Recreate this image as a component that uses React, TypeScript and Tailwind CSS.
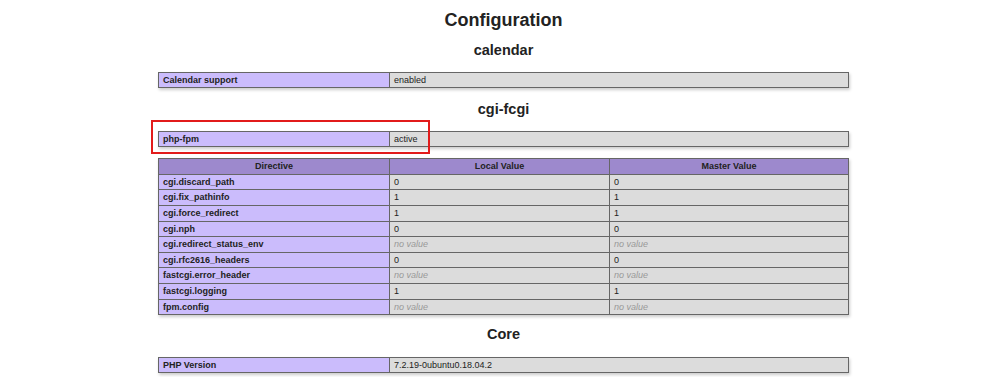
import React from "react";

type Row = { name: string; local: string | null; master: string | null };

const cgiRows: Row[] = [
  { name: "cgi.discard_path", local: "0", master: "0" },
  { name: "cgi.fix_pathinfo", local: "1", master: "1" },
  { name: "cgi.force_redirect", local: "1", master: "1" },
  { name: "cgi.nph", local: "0", master: "0" },
  { name: "cgi.redirect_status_env", local: null, master: null },
  { name: "cgi.rfc2616_headers", local: "0", master: "0" },
  { name: "fastcgi.error_header", local: null, master: null },
  { name: "fastcgi.logging", local: "1", master: "1" },
  { name: "fpm.config", local: null, master: null },
];

const cell = "border border-[#666] px-[4px] py-[2px] text-[9px] leading-[10.6px] align-baseline";
const eCell = `${cell} bg-[#cbbcfc] font-bold text-[#222] w-[231px]`;
const vCell = `${cell} bg-[#dcdcdc] text-[#222]`;
const hCell = `${cell} bg-[#9d89cd] font-bold text-[#222] text-center`;

const Value = ({ v }: { v: string | null }) =>
  v === null ? <i className="text-[#999]">no value</i> : <>{v}</>;

const Section = ({ title, className = "mt-[14px] mb-[14px]" }: { title: string; className?: string }) => (
  <h2 className={`text-[14.5px] leading-[14.5px] font-bold text-[#222] text-center ${className}`}>
    {title}
  </h2>
);

const KeyValue = ({ k, v }: { k: string; v: string }) => (
  <table className="w-[691px] border-collapse shadow-[1px_2px_3px_#ccc]">
    <tbody>
      <tr>
        <td className={eCell}>{k}</td>
        <td className={vCell}>{v}</td>
      </tr>
    </tbody>
  </table>
);

export default function App() {
  return (
    <div
      className="w-[1004px] h-[377px] overflow-hidden bg-white flex flex-col items-center pt-[11px] pl-[3px]"
      style={{ fontFamily: '"Liberation Sans", Arial, sans-serif' }}
    >
      <h1 className="text-[18px] leading-[18px] font-bold text-[#222] text-center">
        Configuration
      </h1>

      <Section title="calendar" />
      <KeyValue k="Calendar support" v="enabled" />

      <Section title="cgi-fcgi" />
      <div className="relative">
        <KeyValue k="php-fpm" v="active" />
        {/* annotation box */}
        <div className="absolute left-[-7px] top-[-11px] w-[279px] h-[34px] border-2 border-[#e21b1b]" />
      </div>

      <table className="w-[691px] border-collapse shadow-[1px_2px_3px_#ccc] mt-[11px]">
        <thead>
          <tr>
            <th className={`${hCell} w-[231px]`}>Directive</th>
            <th className={`${hCell} w-[220px]`}>Local Value</th>
            <th className={hCell}>Master Value</th>
          </tr>
        </thead>
        <tbody>
          {cgiRows.map((r) => (
            <tr key={r.name}>
              <td className={eCell}>{r.name}</td>
              <td className={vCell}>
                <Value v={r.local} />
              </td>
              <td className={vCell}>
                <Value v={r.master} />
              </td>
            </tr>
          ))}
        </tbody>
      </table>

      <Section title="Core" className="mt-[12px] mb-[15px]" />
      <KeyValue k="PHP Version" v="7.2.19-0ubuntu0.18.04.2" />
    </div>
  );
}
